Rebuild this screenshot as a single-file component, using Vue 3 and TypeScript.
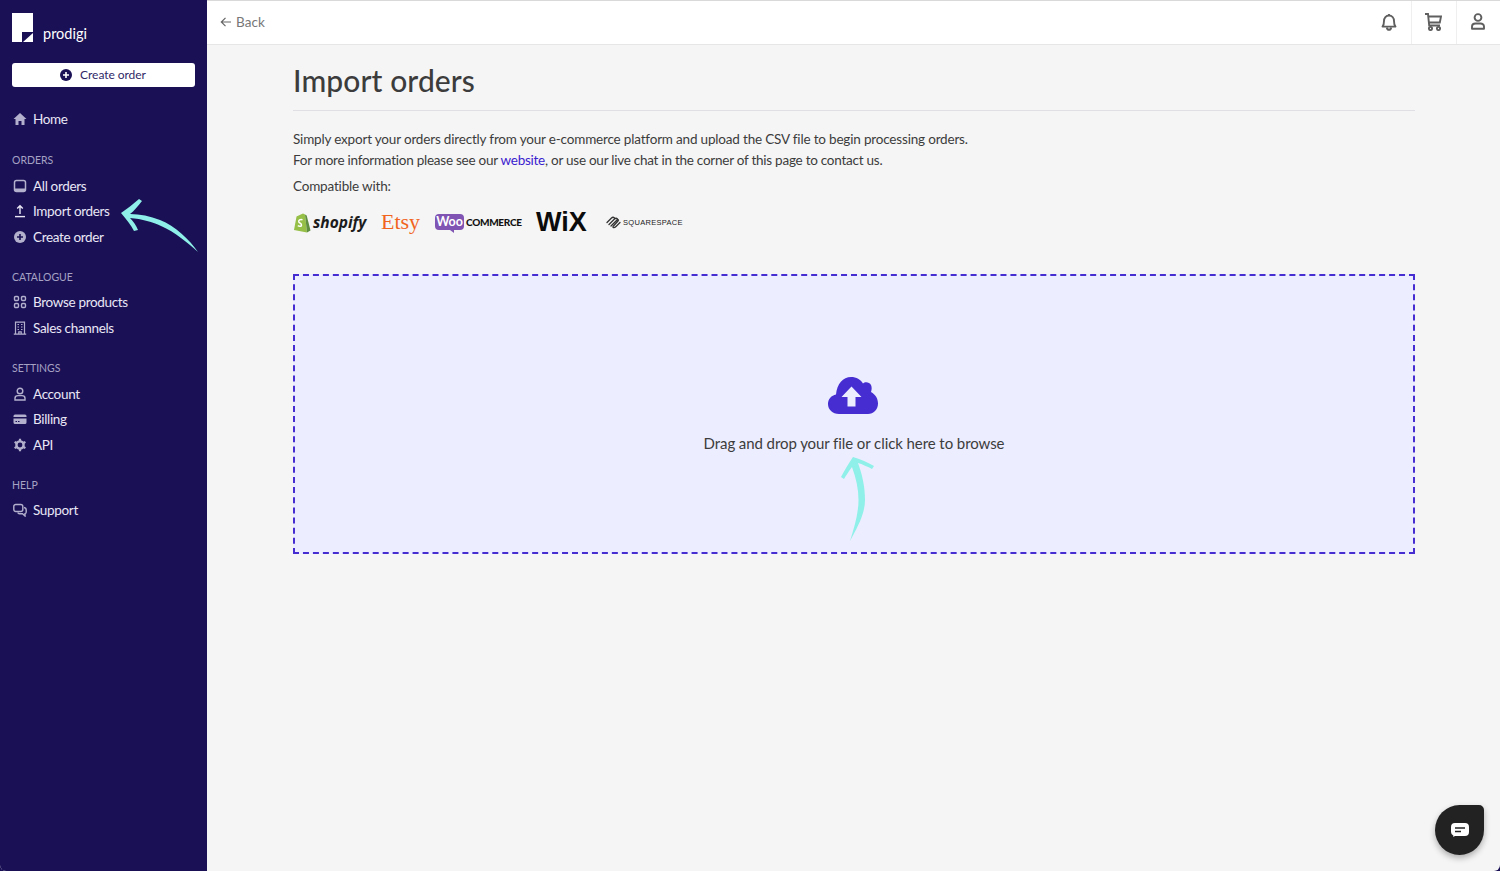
<script setup lang="ts">
interface NavItem { label: string; icon: string }
interface NavGroup { title: string; items: NavItem[] }
const groups: NavGroup[] = [
  { title: 'Orders', items: [
    { label: 'All orders', icon: 'inbox' },
    { label: 'Import orders', icon: 'upload' },
    { label: 'Create order', icon: 'plus' },
  ] },
  { title: 'Catalogue', items: [
    { label: 'Browse products', icon: 'grid' },
    { label: 'Sales channels', icon: 'building' },
  ] },
  { title: 'Settings', items: [
    { label: 'Account', icon: 'user' },
    { label: 'Billing', icon: 'card' },
    { label: 'API', icon: 'gear' },
  ] },
  { title: 'Help', items: [
    { label: 'Support', icon: 'chat' },
  ] },
]
</script>

<template>
  <div class="frame">
    <aside class="sidebar">
      <div class="logo">
        <svg width="21" height="29" viewBox="0 0 21 29">
          <path d="M0 0H21V19H10V29H0Z" fill="#fff" />
          <path d="M11 29L21 20V29Z" fill="#fff" />
        </svg>
        <span class="logo-text">prodigi</span>
      </div>
      <button class="create-btn">
        <svg width="12" height="12" viewBox="0 0 12 12">
          <circle cx="6" cy="6" r="6" fill="#1a1055" />
          <path d="M6 3V9M3 6H9" stroke="#fff" stroke-width="1.6" />
        </svg>
        <span>Create order</span>
      </button>
      <a class="nav-item home">
        <svg class="nav-icon" viewBox="0 0 14 14"><path d="M7 1L13.5 7H11.5V13H8.5V9H5.5V13H2.5V7H.5Z" fill="currentColor" /></svg>
        <span>Home</span>
      </a>
      <section v-for="g in groups" :key="g.title" class="group">
        <h3 class="group-title">{{ g.title }}</h3>
        <a v-for="item in g.items" :key="item.label" class="nav-item">
          <svg class="nav-icon" viewBox="0 0 14 14">
            <g v-if="item.icon === 'inbox'">
              <rect x="1.5" y="1.5" width="11" height="11" rx="2" fill="none" stroke="currentColor" stroke-width="1.5" />
              <path d="M2 9.5H12V12H2Z" fill="currentColor" />
            </g>
            <g v-else-if="item.icon === 'upload'" fill="none" stroke="#e9e7f5" stroke-width="1.4">
              <path d="M7 10V2M4.2 4.6L7 1.8L9.8 4.6" />
              <path d="M2 12.6H12" />
            </g>
            <g v-else-if="item.icon === 'plus'">
              <circle cx="7" cy="7" r="6" fill="currentColor" />
              <path d="M7 4V10M4 7H10" stroke="#1a1055" stroke-width="1.6" />
            </g>
            <g v-else-if="item.icon === 'grid'" fill="none" stroke="currentColor" stroke-width="1.4">
              <rect x="1.5" y="1.5" width="4" height="4" rx="1.2" />
              <rect x="8.5" y="1.5" width="4" height="4" rx="1.2" />
              <rect x="1.5" y="8.5" width="4" height="4" rx="1.2" />
              <rect x="8.5" y="8.5" width="4" height="4" rx="1.2" />
            </g>
            <g v-else-if="item.icon === 'building'" fill="none" stroke="currentColor" stroke-width="1.2">
              <path d="M2.5 13V1.2H11.5V13M.8 13.2H13.2" />
              <path d="M4.5 3.5H6M8 3.5H9.5M4.5 6H6M8 6H9.5M4.5 8.5H6M8 8.5H9.5M5.8 13V10.8H8.2V13" />
            </g>
            <g v-else-if="item.icon === 'user'" fill="none" stroke="currentColor" stroke-width="1.4">
              <circle cx="7" cy="4" r="2.8" />
              <path d="M2 13V11.2C2 9.6 3.4 8.6 5 8.6H9C10.6 8.6 12 9.6 12 11.2V13Z" />
            </g>
            <g v-else-if="item.icon === 'card'">
              <path d="M2 2.5H12A1.5 1.5 0 0 1 13.5 4V5H.5V4A1.5 1.5 0 0 1 2 2.5ZM.5 6.5H13.5V10.5A1.5 1.5 0 0 1 12 12H2A1.5 1.5 0 0 1 .5 10.5Z" fill="currentColor" />
              <path d="M2.5 9.5H4M5 9.5H6.5" stroke="#1a1055" stroke-width="1" />
            </g>
            <g v-else-if="item.icon === 'gear'">
              <circle cx="7" cy="7" r="3.6" fill="none" stroke="currentColor" stroke-width="2.4" />
              <path d="M7 .8V3M7 11V13.2M1.6 3.9L3.5 5M10.5 9L12.4 10.1M1.6 10.1L3.5 9M10.5 5L12.4 3.9" stroke="currentColor" stroke-width="2.2" />
            </g>
            <g v-else fill="none" stroke="currentColor" stroke-width="1.4">
              <rect x=".8" y="1.5" width="9" height="7" rx="2" />
              <path d="M11 4.5C12.5 4.8 13.2 5.6 13.2 7V9C13.2 10 12.6 10.5 12 10.6V13L9.5 10.8H6.5C5.5 10.8 5 10.3 4.8 9.5" />
            </g>
          </svg>
          <span>{{ item.label }}</span>
        </a>
      </section>
    </aside>

    <div class="main">
      <header class="topbar">
        <a class="back">
          <svg width="12" height="12" viewBox="0 0 12 12" fill="none" stroke="#666" stroke-width="1.2"><path d="M11 6H1.5M5.5 1.8L1.3 6L5.5 10.2" /></svg>
          <span>Back</span>
        </a>
        <div class="top-actions">
          <div class="top-action">
            <svg width="16" height="18" viewBox="0 0 16 18" fill="none" stroke="#5f5f5f" stroke-width="1.9"><path d="M1.5 13.6C2.8 12 3 10.5 3 8C3 4.8 5 2.5 8 2.5S13 4.8 13 8C13 10.5 13.2 12 14.5 13.6Z" stroke-linejoin="round" /><path d="M5.8 14.5C6 16 6.8 16.800 8 16.800S10 16 10.200 14.500M8 1V2.500" /></svg>
          </div>
          <div class="top-action nudge">
            <svg width="17" height="18" viewBox="0 0 17 18" fill="none" stroke="#5f5f5f" stroke-width="1.9"><path d="M0 1H3L4.2 12.5H15M3.3 3.5H16L14.8 9.5H3.9" /><circle cx="5.5" cy="15.5" r="1.6" /><circle cx="13.5" cy="15.5" r="1.6" /></svg>
          </div>
          <div class="top-action nudge">
            <svg width="14" height="17" viewBox="0 0 14 17" fill="none" stroke="#5f5f5f" stroke-width="1.9"><circle cx="7" cy="4.5" r="3.4" /><path d="M1 15.8V13.5C1 11.5 2.6 10.500 4.500 10.500H9.500C11.400 10.500 13 11.500 13 13.500V15.800Z" stroke-linejoin="round" /></svg>
          </div>
        </div>
      </header>

      <main class="content">
        <h1 class="title">Import orders</h1>
        <p class="para">Simply export your orders directly from your e-commerce platform and upload the CSV file to begin processing orders.</p>
        <p class="para tight">For more information please see our <a class="link">website</a>, or use our live chat in the corner of this page to contact us.</p>
        <p class="para compat">Compatible with:</p>
        <div class="brands">
          <div class="brand shopify">
            <svg width="18" height="21" viewBox="0 0 18 21">
              <path d="M1 18L3.5 4.5L10 1.5L12 2.5L14 20.5Z" fill="#95bf47" />
              <path d="M12 2.5L13.7 3.6L17.5 18.5L14 20.5Z" fill="#5e8e3e" />
              <path d="M9.5 7.8C7 7 5.5 8.3 5.8 9.7C6.2 11.3 8.8 11.3 8.5 13.3C8.3 14.6 6.5 14.7 4.8 13.7" fill="none" stroke="#fff" stroke-width="1.5" />
            </svg>
            <span>shopify</span>
          </div>
          <span class="brand etsy">Etsy</span>
          <div class="brand woo">
            <span class="woo-box">Woo</span>
            <span class="woo-text">COMMERCE</span>
          </div>
          <span class="brand wix">WiX</span>
          <div class="brand sqsp">
            <svg width="15" height="13" viewBox="0 0 15 13" fill="none" stroke="#333" stroke-width="1.3" stroke-linecap="round">
              <path d="M1 6.5L5.5 2C6.5 1 7.5 1 8.5 2M3 8.5L8.5 3C9.5 2 10.5 2 11.5 3M5 10L11 4C12 3 13 4 12 5L7 10.5M7 11.5C8 12 9 11.5 10 10.5L14 6.5" />
            </svg>
            <span>SQUARESPACE</span>
          </div>
        </div>

        <div class="dropzone">
          <svg class="cloud" width="50" height="37" viewBox="0 0 50 37">
            <path d="M11 37C4.5 37 0 32.5 0 27C0 21.8 3.5 18.5 8 17.5C9 7 15 0 23 0C28.5 0 32.5 2.5 35 6.5C37 4.5 41.5 5 43 8C44 10.5 43.8 12.5 43 15C47.5 17.5 50 21.5 50 26.5C50 32.5 45.5 37 40 37Z" fill="#452dd1" />
            <path d="M23.5 9.5L33.5 20H27.5V29.5H19.5V20H13.5Z" fill="#ecedfe" />
          </svg>
          <span class="drop-text">Drag and drop your file or click here to browse</span>
        </div>
      </main>
    </div>

    <svg class="arrow arrow-side" width="80" height="56" viewBox="0 0 80 56">
      <path d="M78 54C70 42 55 28 40 22C30 18 20 16 10 16C14 13 18 8 22 3L19 1C13 6 7 11 1 15C6 21 11 27 14 33L18 32C16 27 13 23 10 20C22 21 33 24 41 28C55 34 68 45 78 54Z" fill="#8ff0e9" />
    </svg>
    <svg class="arrow arrow-drop" width="36" height="86" viewBox="0 0 36 86">
      <path d="M10 85C17 72 25 58 25 44C25 30 22 18 18 7C22 8 28 11 32 13L34 10C27 6 20 3 13 1C9 7 4 15 1 21L4 23C7 18 9 15 12 11C16 22 18.5 33 18.5 44C18.5 58 14 72 10 85Z" fill="#8ff0e9" />
    </svg>

    <button class="chat" aria-label="Chat">
      <svg width="18" height="14" viewBox="0 0 18 14">
        <path d="M4 0H14A4 4 0 0 1 18 4V9A4 4 0 0 1 14 13H4L2 14L2.5 12.7A4 4 0 0 1 0 9V4A4 4 0 0 1 4 0Z" fill="#fff" />
        <path d="M4 5H14M4 8.5H10" stroke="#222" stroke-width="1.3" />
      </svg>
    </button>
  </div>
</template>

<style>
html, body { margin: 0; background: #1a1055; }
</style>

<style scoped>
.frame {
  position: relative;
  width: 1500px;
  height: 871px;
  display: flex;
  overflow: hidden;
  border-radius: 0 0 6px 6px;
  background: #f5f5f5;
  font-family: Lato, "Noto Sans", sans-serif;
  color: #3c3c3c;
}
.sidebar {
  width: 207px;
  flex: none;
  box-sizing: border-box;
  padding: 13px 12px 0;
  background: #1a1055;
  color: #e9e7f5;
  display: flex;
  flex-direction: column;
}
.logo {
  display: flex;
  align-items: flex-end;
  gap: 10px;
  height: 29px;
}
.logo-text {
  color: #fff;
  font-size: 14.5px;
  line-height: 17px;
}
.create-btn {
  margin-top: 21px;
  height: 24px;
  width: 183px;
  border: 0;
  border-radius: 3px;
  background: #fff;
  color: #2f2868;
  font: inherit;
  font-size: 12px;
  letter-spacing: -0.05px;
  display: flex;
  align-items: center;
  justify-content: center;
  gap: 8px;
  padding: 0 1px 1px 0;
}
.nav-item {
  display: flex;
  align-items: center;
  height: 25.5px;
  font-size: 13.5px;
  letter-spacing: -0.33px;
  white-space: nowrap;
}
.home { margin-top: 19px; margin-bottom: 1px; }
.nav-icon {
  width: 14px;
  height: 14px;
  margin-left: 0.5px;
  margin-right: 6.5px;
  flex: none;
  color: #b3b0cd;
}
.group { margin-top: 20.3px; }
.group-title {
  margin: 0 0 6px;
  font-size: 10.5px;
  line-height: 14px;
  font-weight: 400;
  text-transform: uppercase;
  color: #a5a2c4;
}
.main {
  flex: 1;
  min-width: 0;
  display: flex;
  flex-direction: column;
}
.topbar {
  height: 45px;
  box-sizing: border-box;
  flex: none;
  background: #fff;
  border-top: 1px solid #d9d9d9;
  border-bottom: 1px solid #e6e6e6;
  display: flex;
  align-items: stretch;
  justify-content: space-between;
  padding-left: 13px;
}
.back {
  display: flex;
  align-items: center;
  gap: 4px;
  font-size: 13.5px;
  color: #777;
  letter-spacing: 0.1px;
  padding-bottom: 2px;
}
.top-actions { display: flex; }
.top-action {
  width: 45px;
  display: flex;
  align-items: center;
  justify-content: center;
  border-left: 1px solid #efefef;
  box-sizing: border-box;
  padding-bottom: 2px;
}
.top-action.nudge { padding-right: 2px; }
.top-action:first-child { border-left: 0; }
.top-action:last-child { width: 44px; }
.content {
  padding: 0 85px 0 86px;
  display: flex;
  flex-direction: column;
}
.title {
  margin: 0 0 18px;
  padding: 17px 0 11px;
  border-bottom: 1px solid #dfdfe4;
  font-size: 30px;
  line-height: 37px;
  font-weight: 500;
  color: #3c3c3c;
  letter-spacing: 0.1px;
}
.para {
  margin: 0;
  font-size: 13.5px;
  letter-spacing: -0.18px;
  line-height: 21px;
  white-space: nowrap;
}
.para.tight { letter-spacing: -0.25px; }
.compat { margin-top: 5px; }
.link { color: #3a22cf; }
.brands {
  display: flex;
  align-items: center;
  height: 24px;
  margin-top: 13px;
}
.brand { display: flex; align-items: center; white-space: nowrap; }
.shopify { gap: 2px; width: 88px; }
.shopify span {
  font-family: "Open Sans", sans-serif;
  font-weight: 700;
  font-style: italic;
  font-size: 15.5px;
  color: #1c1c1c;
}
.etsy {
  width: 54px;
  font-family: "Liberation Serif", serif;
  font-size: 22px;
  color: #f1641e;
}
.woo { width: 101px; gap: 2px; }
.woo-box {
  position: relative;
  display: block;
  background: #7f54b3;
  color: #fff;
  font-size: 12.5px;
  font-weight: 700;
  border-radius: 4px;
  height: 16px;
  line-height: 15px;
  width: 29px;
  text-align: center;
}
.woo-box::after {
  content: "";
  position: absolute;
  left: 15px;
  bottom: -3px;
  border-top: 3px solid #7f54b3;
  border-left: 4px solid transparent;
}
.woo-text {
  font-size: 10px;
  font-weight: 900;
  color: #111;
  letter-spacing: -0.3px;
}
.wix {
  width: 70px;
  font-family: "Liberation Sans", sans-serif;
  font-weight: 700;
  font-size: 27px;
  color: #0b0b0b;
}
.sqsp { gap: 2px; }
.sqsp span {
  font-family: "Liberation Sans", sans-serif;
  font-size: 7.5px;
  letter-spacing: 0.3px;
  color: #222;
}
.dropzone {
  margin-top: 40px;
  height: 280px;
  box-sizing: border-box;
  border: 2px dashed #452dd1;
  background: #ecedfe;
  display: flex;
  flex-direction: column;
  align-items: center;
  padding-top: 101px;
}
.cloud { margin-right: 2px; }
.drop-text {
  margin-top: 18px;
  font-size: 15px;
  letter-spacing: -0.08px;
  line-height: 22px;
  color: #3c3c3c;
}
.arrow { position: absolute; }
.arrow-side { left: 120px; top: 198px; }
.arrow-drop { left: 840px; top: 456px; }
.chat {
  position: absolute;
  left: 1435px;
  top: 805px;
  width: 49px;
  height: 50px;
  border: 0;
  padding: 0;
  border-radius: 50% 5px 50% 50%;
  background: #222;
  box-shadow: 0 3px 6px rgba(0, 0, 0, 0.3);
  display: flex;
  align-items: center;
  justify-content: center;
}
</style>
